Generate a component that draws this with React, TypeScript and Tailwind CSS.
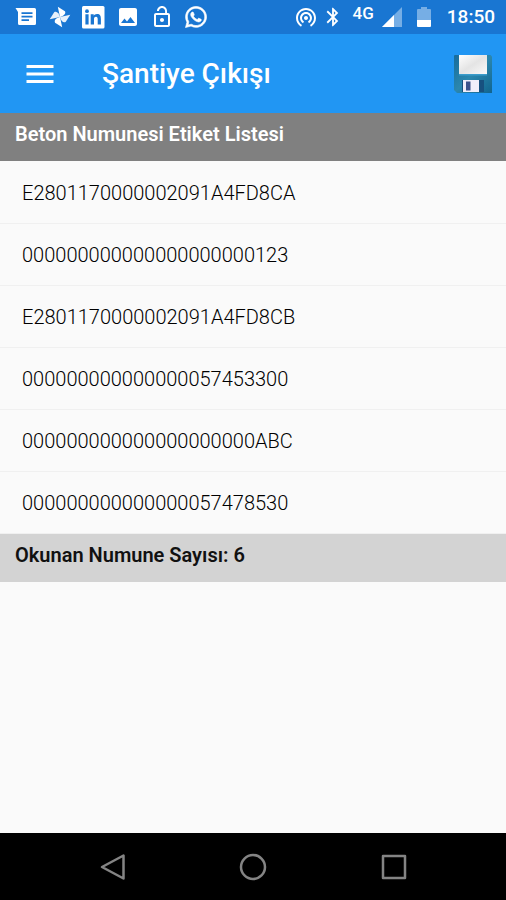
import React, { useState } from "react";
import { FaWhatsapp } from "react-icons/fa";
import {
  MdBluetooth,
  MdImage,
  MdLockOpen,
  MdMenu,
  MdWifiTethering,
} from "react-icons/md";

const initialTags = [
  "E2801170000002091A4FD8CA",
  "000000000000000000000123",
  "E2801170000002091A4FD8CB",
  "000000000000000057453300",
  "000000000000000000000ABC",
  "000000000000000057478530",
];

const MessagesIcon = () => (
  <svg viewBox="0 0 24 24" className="size-6" fill="none">
    <path
      d="M1.500 3h19a1.500 1.500 0 0 1 1.500 1.500v14a1.500 1.500 0 0 1-1.500 1.500h-15A1.500 1.500 0 0 1 4 18.500V7z"
      fill="#fff"
    />
    <path d="M7.500 8.200h11M7.500 11.700h11M7.500 15.200h7.500" stroke="#1976d2" strokeWidth="1.700" />
  </svg>
);

const PinwheelIcon = () => (
  <svg viewBox="0 0 24 24" className="size-6" fill="#fff">
    <g transform="rotate(-12 12 12)">
      <path d="M12 12V1.500L18 7.500c.8 2.500-2 4.500-6 4.500z" />
      <path d="M12 12h10.500L16.500 18c-2.500.8-4.500-2-4.500-6z" opacity="0.9" />
      <path d="M12 12v10.500L6 16.500c-.8-2.500 2-4.500 6-4.500z" />
      <path d="M12 12H1.500L7.500 6c2.500-.8 4.500 2 4.500 6z" opacity="0.9" />
    </g>
  </svg>
);

const LinkedinIcon = () => (
  <svg viewBox="0 0 24 24" className="size-6">
    <rect x="0" y="1" width="22.500" height="22.500" rx="1.500" fill="#fff" />
    <g fill="#1976d2">
      <circle cx="5" cy="6.200" r="1.900" />
      <path d="M3.400 9.300h3.200v10.200H3.400zM8.700 9.300h3v1.500c.6-1 1.700-1.750 3.300-1.750 3.200 0 3.900 2.100 3.900 4.900v5.550h-3.200v-4.900c0-1.300-.1-2.750-1.700-2.750s-2 1.200-2 2.600v5.050H8.700z" />
    </g>
  </svg>
);

const SignalIcon = () => (
  <svg viewBox="0 0 20 20" className="size-5">
    <path d="M0 20L20 0v20z" fill="#76aee5" />
    <path d="M0 20L12 8v12z" fill="#fff" />
  </svg>
);

const BatteryIcon = () => (
  <svg viewBox="0 0 14 20" className="h-5 w-[14px]">
    <path d="M4 0h6v2h3a1 1 0 0 1 1 1v10H0V3a1 1 0 0 1 1-1h3z" fill="#76aee5" />
    <path d="M0 13h14v6a1 1 0 0 1-1 1H1a1 1 0 0 1-1-1z" fill="#fff" />
  </svg>
);

const FloppyIcon = () => (
  <svg viewBox="0 0 38 38" className="size-[38px]">
    <defs>
      <linearGradient id="disk" x1="0" y1="0" x2="1" y2="1">
        <stop offset="0" stopColor="#176c9c" />
        <stop offset="0.500" stopColor="#2b87ae" />
        <stop offset="1" stopColor="#11648e" />
      </linearGradient>
      <linearGradient id="label" x1="0" y1="0" x2="1" y2="1">
        <stop offset="0" stopColor="#ffffff" />
        <stop offset="0.500" stopColor="#e4e4e4" />
        <stop offset="1" stopColor="#fafafa" />
      </linearGradient>
    </defs>
    <path d="M1 0h35.500L38 1.500V38H3l-3-3V1a1 1 0 0 1 1-1z" fill="url(#disk)" />
    <path d="M5 0h28v19H5z" fill="url(#label)" />
    <path d="M5 19h28v1.500H5z" fill="#3b9ccb" />
    <path d="M8 25h22v12H8z" fill="#17507f" />
    <path d="M9 25h16v12H9z" fill="#f0eefa" />
    <path d="M12 26.500h4.500v9H12z" fill="#3d528b" />
  </svg>
);

const StatusBar = () => (
  <div className="flex h-[34px] items-center justify-between bg-[#1976d2] pr-[11px] pl-[14px] text-white">
    <div className="flex items-center gap-[10px]">
      <MessagesIcon />
      <PinwheelIcon />
      <LinkedinIcon />
      <MdImage className="size-6" />
      <MdLockOpen className="size-6" />
      <FaWhatsapp className="size-6" stroke="#fff" strokeWidth="14" />
    </div>
    <div className="flex items-center">
      <MdWifiTethering className="size-6" />
      <MdBluetooth className="ml-1 size-[22px]" />
      <span className="ml-[9px] pb-2 text-[17px] leading-5 font-medium">4G</span>
      <span className="ml-2">
        <SignalIcon />
      </span>
      <span className="ml-[15px]">
        <BatteryIcon />
      </span>
      <span className="ml-4 text-[19px] leading-6 font-medium">18:50</span>
    </div>
  </div>
);

const NavigationBar = () => (
  <nav className="flex h-[67px] items-center justify-center bg-black text-[#848484]">
    <button type="button" aria-label="Geri" className="flex w-[140px] justify-center">
      <svg viewBox="0 0 28 28" className="size-7" fill="none" stroke="currentColor" strokeWidth="2.500" strokeLinejoin="round">
        <path d="M24.500 2.500v23L3 14z" />
      </svg>
    </button>
    <button type="button" aria-label="Ana ekran" className="flex w-[140px] justify-center">
      <svg viewBox="0 0 28 28" className="size-7" fill="none" stroke="currentColor" strokeWidth="2.500">
        <circle cx="14" cy="14" r="12" />
      </svg>
    </button>
    <button type="button" aria-label="Son uygulamalar" className="flex w-[140px] justify-center">
      <svg viewBox="0 0 28 28" className="size-7" fill="none" stroke="currentColor" strokeWidth="2.500" strokeLinejoin="round">
        <rect x="4" y="3" width="22" height="22" />
      </svg>
    </button>
  </nav>
);

const App = () => {
  const [tags] = useState<string[]>(initialTags);

  return (
    <div className="flex min-h-screen flex-col bg-[#fafafa] font-['Roboto',sans-serif]">
      <StatusBar />

      {/* header */}
      <header className="flex h-[79px] items-center bg-[#2196f3] pr-[14px] pl-[22px] text-white">
        <button type="button" aria-label="Menü" className="cursor-pointer">
          <MdMenu className="size-9" />
        </button>
        <h1 className="ml-11 flex-1 text-[28px] leading-9 font-medium">
          Şantiye Çıkışı
        </h1>
        <button type="button" aria-label="Kaydet" className="cursor-pointer">
          <FloppyIcon />
        </button>
      </header>

      <main className="flex-1">
        <h2 className="h-12 bg-[#808080] px-[15px] pt-[9px] text-[20px] leading-6 font-semibold text-white">
          Beton Numunesi Etiket Listesi
        </h2>
        <ul className="pt-px">
          {tags.map((tag) => (
            <li
              key={tag}
              className="flex h-[62px] items-center border-b border-[#f0f0f0] px-[22px] text-[20px] leading-6 font-light text-black"
            >
              {tag}
            </li>
          ))}
        </ul>
        <p className="h-12 bg-[#d3d3d3] px-[15px] pt-[9px] text-[20px] leading-6 font-semibold text-[#111111]">
          Okunan Numune Sayısı: {tags.length}
        </p>
      </main>

      <NavigationBar />
    </div>
  );
};

export default App;
